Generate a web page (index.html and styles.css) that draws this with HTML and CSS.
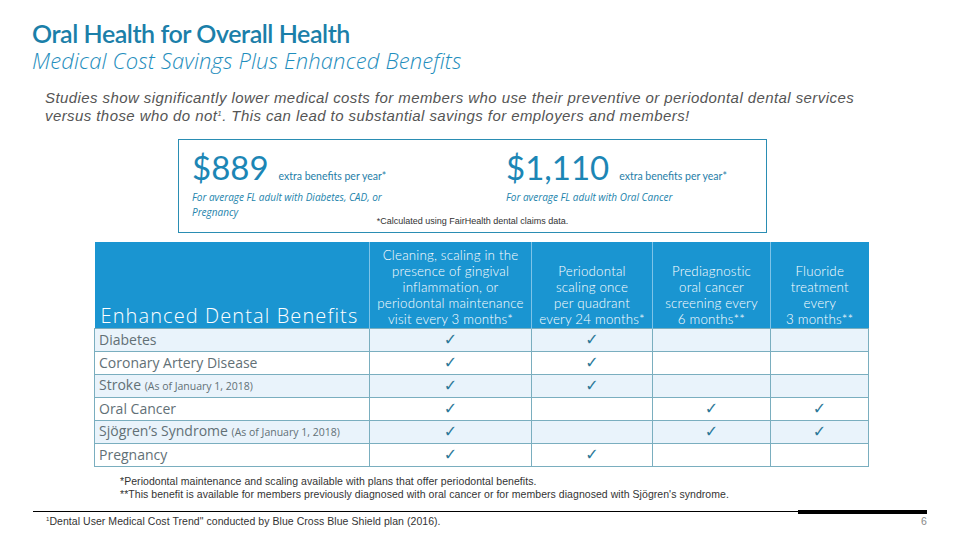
FILE: index.html
```html
<!DOCTYPE html>
<html>
<head>
<meta charset="utf-8">
<link rel="stylesheet" href="styles.css">
</head>
<body>
<div class="slide">
  <h1 class="title">Oral Health for Overall Health</h1>
  <h2 class="subtitle">Medical Cost Savings Plus Enhanced Benefits</h2>
  <p class="intro">Studies show significantly lower medical costs for members who use their preventive or periodontal dental services<br>versus those who do not<sup>1</sup>. This can lead to substantial savings for employers and members!</p>

  <div class="savings">
    <div class="stats">
      <div class="stat">
        <div class="amount-line"><span class="amount">$889</span><span class="per">extra benefits per year*</span></div>
        <div class="who">For average FL adult with Diabetes, CAD, or Pregnancy</div>
      </div>
      <div class="stat">
        <div class="amount-line"><span class="amount">$1,110</span><span class="per">extra benefits per year*</span></div>
        <div class="who">For average FL adult with Oral Cancer</div>
      </div>
    </div>
    <div class="calc">*Calculated using FairHealth dental claims data.</div>
  </div>

  <table class="benefits">
    <colgroup>
      <col class="c1"><col class="c2"><col class="c3"><col class="c4"><col class="c5">
    </colgroup>
    <thead>
      <tr>
        <th class="main">Enhanced Dental Benefits</th>
        <th>Cleaning, scaling in the<br>presence of gingival<br>inflammation, or<br>periodontal maintenance<br>visit every 3 months*</th>
        <th>Periodontal<br>scaling once<br>per quadrant<br>every 24 months*</th>
        <th>Prediagnostic<br>oral cancer<br>screening every<br>6 months**</th>
        <th>Fluoride<br>treatment<br>every<br>3 months**</th>
      </tr>
    </thead>
    <tbody>
      <tr class="alt"><td>Diabetes</td><td>✓</td><td>✓</td><td></td><td></td></tr>
      <tr><td>Coronary Artery Disease</td><td>✓</td><td>✓</td><td></td><td></td></tr>
      <tr class="alt"><td>Stroke <small>(As of January 1, 2018)</small></td><td>✓</td><td>✓</td><td></td><td></td></tr>
      <tr><td>Oral Cancer</td><td>✓</td><td></td><td>✓</td><td>✓</td></tr>
      <tr class="alt"><td>Sjögren’s Syndrome <small>(As of January 1, 2018)</small></td><td>✓</td><td></td><td>✓</td><td>✓</td></tr>
      <tr><td>Pregnancy</td><td>✓</td><td>✓</td><td></td><td></td></tr>
    </tbody>
  </table>

  <div class="notes">
    <p>*Periodontal maintenance and scaling available with plans that offer periodontal benefits.</p>
    <p>**This benefit is available for members previously diagnosed with oral cancer or for members diagnosed with Sjögren's syndrome.</p>
  </div>

  <div class="rule"><span class="thin"></span><span class="thick"></span></div>
  <div class="footer">
    <span class="src"><sup>1</sup>Dental User Medical Cost Trend" conducted by Blue Cross Blue Shield plan (2016).</span>
    <span class="page">6</span>
  </div>
</div>
</body>
</html>
```

FILE: styles.css
```css
html, body { margin: 0; padding: 0; background: #fff; }
.slide {
  width: 960px;
  height: 540px;
  overflow: hidden;
  background: #fff;
}
.title {
  margin: 0;
  padding: 19px 0 0 32px;
  font: 600 25px/28px Lato, "Open Sans", sans-serif;
  color: #1b7fa9;
  letter-spacing: -0.45px;
}
.subtitle {
  margin: 0;
  padding-left: 32px;
  font: italic 300 22px/26px "Open Sans", sans-serif;
  color: #1f8ebd;
  letter-spacing: 0.15px;
}
.intro {
  margin: 16px 0 0 45px;
  width: 880px;
  font: italic 15px/18px "Liberation Sans", Arial, sans-serif;
  color: #555;
  letter-spacing: 0.42px;
  white-space: nowrap;
}
.intro sup { font-size: 8px; line-height: 0; vertical-align: 5px; }

.savings {
  margin: 14px 0 0 178px;
  width: 589px;
  height: 94px;
  box-sizing: border-box;
  border: 1px solid #2a8db3;
  padding: 6px 0 0 13px;
}
.stats { display: grid; grid-template-columns: 314px 1fr; }
.amount-line { display: flex; align-items: baseline; gap: 10px; height: 42px; }
.amount { font: 400 33px/42px Lato, sans-serif; color: #1c86b5; }
.per { font: 400 10.5px Lato, sans-serif; color: #1f7ea8; }
.who {
  margin-top: 2px;
  width: 230px;
  font: italic 10px/15px "Open Sans", sans-serif;
  color: #2384ac;
}
.calc {
  margin-top: -4px;
  padding-right: 13px;
  text-align: center;
  font: 9px/10px "Liberation Sans", Arial, sans-serif;
  color: #333;
}

.benefits {
  margin: 9px 0 0 94px;
  width: 774px;
  border-collapse: collapse;
  table-layout: fixed;
  font-family: "Open Sans", sans-serif;
}
.c1 { width: 275px; } .c2 { width: 162px; } .c3 { width: 121px; } .c4 { width: 118px; } .c5 { width: 98px; }
.benefits th {
  height: 86px;
  padding: 0 0 1px;
  box-sizing: border-box;
  background: #1a95d1;
  color: #fff;
  font: 300 13.3px/16px Lato, sans-serif;
  letter-spacing: 0.2px;
  vertical-align: bottom;
  text-align: center;
  border-left: 1px solid #7dc3e8;
  white-space: nowrap;
}
.benefits th.main {
  text-align: left;
  padding: 0 0 0 6px;
  border-left: none;
  font: 300 20px/24px "Open Sans", sans-serif;
  letter-spacing: 1.1px;
}
.benefits td {
  height: 22px;
  padding: 0 0 0 4px;
  border: 1px solid #7aaebf;
  font: 400 14px/18px "Open Sans", sans-serif;
  letter-spacing: 0;
  color: #627076;
  text-align: center;
  background: #fff;
  white-space: nowrap;
}
.benefits tr.alt td { background: #e9f3fb; }
.benefits td:first-child { text-align: left; }
.benefits td:not(:first-child) { color: #2c7898; font-size: 16px; font-family: "DejaVu Sans", sans-serif; padding: 0; }
.benefits td small { font-size: 10.5px; letter-spacing: 0; }

.notes {
  margin: 8px 0 0 120px;
  font: 10.5px/13px "Liberation Sans", Arial, sans-serif;
  color: #333;
  letter-spacing: 0.05px;
}
.notes p { margin: 0; }

.rule {
  margin: 9px 0 0 33px;
  width: 894px;
  display: flex;
  align-items: center;
}
.thin { flex: 1; height: 1px; background: #000; }
.thick { width: 129px; height: 4px; background: #000; }

.footer {
  margin: 1px 0 0 46px;
  width: 881px;
  display: flex;
  justify-content: space-between;
  font: 10.5px/13px "Liberation Sans", Arial, sans-serif;
  color: #333;
  letter-spacing: 0.05px;
}
.footer sup { font-size: 6px; vertical-align: 4px; line-height: 0; }
.page { color: #888; }
```
